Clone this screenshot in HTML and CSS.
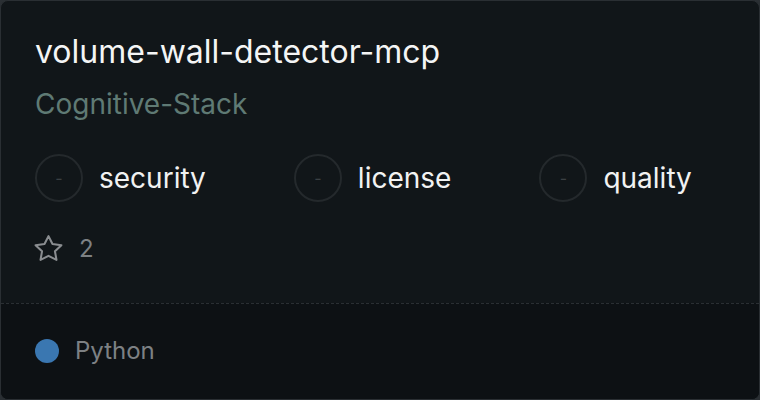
FILE: index.html
```html
<!DOCTYPE html>
<html>
<head>
    <meta name="viewport" content="width=device-width, initial-scale=1.0">
    <title>volume-wall-detector-mcp</title>
    <link rel="stylesheet" href="styles.css">
</head>
<body>
    <div class="card">
        <div class="card-body">
            <h1 class="repo-name">volume-wall-detector-mcp</h1>
            <div class="repo-owner">Cognitive-Stack</div>
            <div class="scores">
                <div class="score">
                    <span class="score-ring">-</span>
                    <span class="score-label">security</span>
                </div>
                <div class="score">
                    <span class="score-ring">-</span>
                    <span class="score-label">license</span>
                </div>
                <div class="score">
                    <span class="score-ring">-</span>
                    <span class="score-label">quality</span>
                </div>
            </div>
            <div class="stars">
                <svg class="star-icon" width="31" height="30" viewBox="0 0 24 24" fill="none" stroke="currentColor" stroke-width="1.6" stroke-linejoin="round" preserveAspectRatio="none">
                    <path d="M12 2.5l3.09 6.26L22 9.77l-5 4.87 1.18 6.88L12 18.27l-6.18 3.25L7 14.64 2 9.77l6.91-1.01z"/>
                </svg>
                <span class="star-count">2</span>
            </div>
        </div>
        <div class="card-footer">
            <span class="lang-dot"></span>
            <span class="lang-name">Python</span>
        </div>
    </div>
</body>
</html>
```

FILE: styles.css
```css
* {
    box-sizing: border-box;
}
html, body {
    height: 100%;
}
body {
    margin: 0;
    font-family: Inter, "Noto Sans", sans-serif;
    background-color: #2a2f33;
}
.card {
    display: flex;
    flex-direction: column;
    height: 100%;
    background-color: #111619;
    border: 1px solid #2a2f33;
    border-radius: 8px;
    overflow: hidden;
}
.card-body {
    padding: 34px 34px 41px;
}
.repo-name {
    margin: 0;
    font-size: 32px;
    font-weight: 400;
    line-height: 34px;
    color: #f4f5f5;
}
.repo-owner {
    margin-top: 19px;
    font-size: 28px;
    line-height: 32px;
    color: #5f7a74;
}
.scores {
    display: flex;
    gap: 88px;
    margin-top: 34px;
}
.score {
    display: flex;
    align-items: center;
    gap: 16px;
}
.score-ring {
    display: flex;
    align-items: center;
    justify-content: center;
    width: 48px;
    height: 48px;
    border: 2px solid #24292c;
    border-radius: 50%;
    font-size: 16px;
    color: #3b4043;
}
.score-label {
    font-size: 28px;
    color: #f1f2f2;
}
.stars {
    display: flex;
    align-items: center;
    gap: 15px;
    margin-top: 32px;
    margin-left: -2px;
    height: 28px;
    color: #8a8d90;
}
.star-count {
    font-size: 24px;
    color: #7d8184;
}
.card-footer {
    flex: 1;
    display: flex;
    align-items: center;
    gap: 16px;
    padding: 0 34px 2px;
    background-color: #0d1114;
    border-top: 1px dashed #2a2f33;
}
.lang-dot {
    width: 24px;
    height: 24px;
    border-radius: 50%;
    background-color: #3a77b1;
}
.lang-name {
    font-size: 24px;
    color: #7d8184;
}
```
